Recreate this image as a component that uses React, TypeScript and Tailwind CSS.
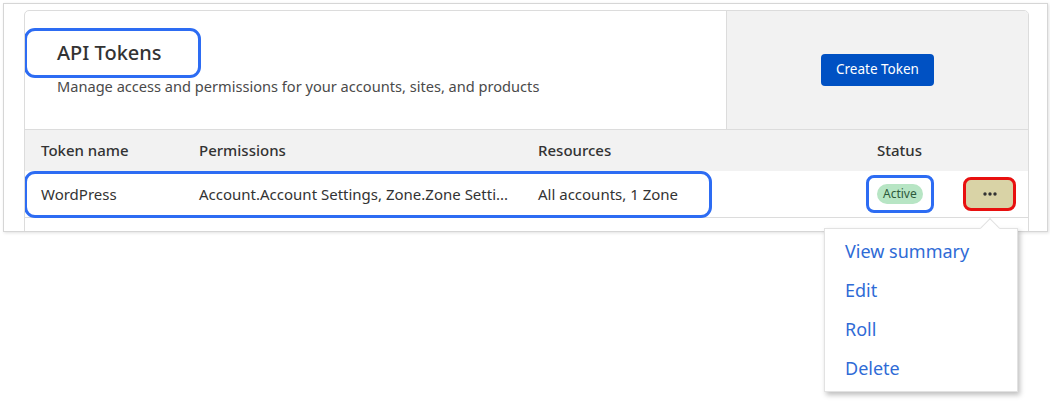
import React from 'react';

const font = { fontFamily: '"Segoe UI", "Noto Sans", "Open Sans", sans-serif' };

type Token = {
  name: string;
  permissions: string;
  resources: string;
  status: string;
};

const tokens: Token[] = [
  {
    name: 'WordPress',
    permissions: 'Account.Account Settings, Zone.Zone Setti...',
    resources: 'All accounts, 1 Zone',
    status: 'Active',
  },
];

const menuItems = ['View summary', 'Edit', 'Roll', 'Delete'];

function Dots() {
  return (
    <svg width="14" height="4" viewBox="0 0 14 4">
      <circle cx="2" cy="2" r="1.7" fill="#333" />
      <circle cx="7" cy="2" r="1.7" fill="#333" />
      <circle cx="12" cy="2" r="1.7" fill="#333" />
    </svg>
  );
}

export default function App() {
  return (
    <div className="relative w-[1050px] h-[402px] bg-white text-[#333]" style={font}>
      <div className="pt-[3px] pl-[3px]">
        {/* framed capture of the tokens card */}
        <div className="w-[1045px] h-[229px] border border-[#d6d6d6] shadow-[1px_1px_3px_rgba(0,0,0,0.12)] overflow-hidden pl-[20px] pt-[6px] bg-white">
          <div className="w-[1005px] h-[240px] border border-[#dcdcdc] rounded-t-[5px] overflow-hidden bg-white">
            {/* header */}
            <div className="flex h-[119px] border-b border-[#dcdcdc]">
              <div className="flex-1 pl-[32px] pt-[29px]">
                <div className="relative">
                  <div className="absolute left-[-33px] top-[-12px] w-[177px] h-[50px] border-[3px] border-[#2d6cf3] rounded-[11px]" />
                  <h1 className="text-[20px] font-medium leading-[26px] text-[#333]">API Tokens</h1>
                </div>
                <p className="mt-[10px] text-[14.6px] leading-[20px] text-[#4a4a4a]">
                  Manage access and permissions for your accounts, sites, and products
                </p>
              </div>
              <div className="w-[302px] bg-[#f2f2f2] border-l border-[#dcdcdc] flex items-center justify-center">
                <button className="h-[32px] px-[15px] rounded-[4px] bg-[#0051c3] text-white text-[13.5px] mt-[-1px]">
                  Create Token
                </button>
              </div>
            </div>

            {/* table */}
            <div className="flex items-center h-[41px] bg-[#f2f2f2] text-[15px] font-medium text-[#333]">
              <div className="w-[174px] pl-[16px]">Token name</div>
              <div className="w-[339px]">Permissions</div>
              <div className="w-[339px]">Resources</div>
              <div className="flex-1">Status</div>
            </div>
            {tokens.map((t) => (
              <div key={t.name} className="relative flex items-center h-[47px] border-b border-[#dcdcdc] text-[15px] text-[#333]">
                <div className="absolute left-[-1px] top-0 w-[688px] h-[47px] border-[3px] border-[#2d6cf3] rounded-[11px]" />
                <div className="w-[174px] pl-[16px]">{t.name}</div>
                <div className="w-[339px] whitespace-nowrap">{t.permissions}</div>
                <div className="w-[339px]">{t.resources}</div>
                <div className="w-[86px] flex">
                  <div className="relative ml-[-11px] py-[6px] px-[8px] border-[3px] border-[#2d6cf3] rounded-[8px]">
                    <span className="block px-[6px] h-[20px] leading-[20px] rounded-full bg-[#b7e5c4] text-[12px] text-[#2d5a3b]">
                      {t.status}
                    </span>
                  </div>
                </div>
                <button className="w-[53px] h-[34px] rounded-[8px] border-[3px] border-[#e8100f] bg-[#d9d3a6] flex items-center justify-center">
                  <Dots />
                </button>
              </div>
            ))}
          </div>
        </div>
      </div>

      {/* actions menu */}
      <div className="absolute left-[824px] top-[228px] w-[194px] h-[164px] bg-white border border-[#e2e2e2] shadow-[2px_3px_5px_rgba(0,0,0,0.25)] py-[10px]">
        <div className="absolute left-[158px] top-[-8px] w-[14px] h-[14px] bg-white border-l border-t border-[#e2e2e2] rotate-45" />
        {menuItems.map((item) => (
          <div key={item} className="relative px-[20px] h-[39px] leading-[25px] text-[18px] text-[#2f6bd6]">
            {item}
          </div>
        ))}
      </div>
    </div>
  );
}
